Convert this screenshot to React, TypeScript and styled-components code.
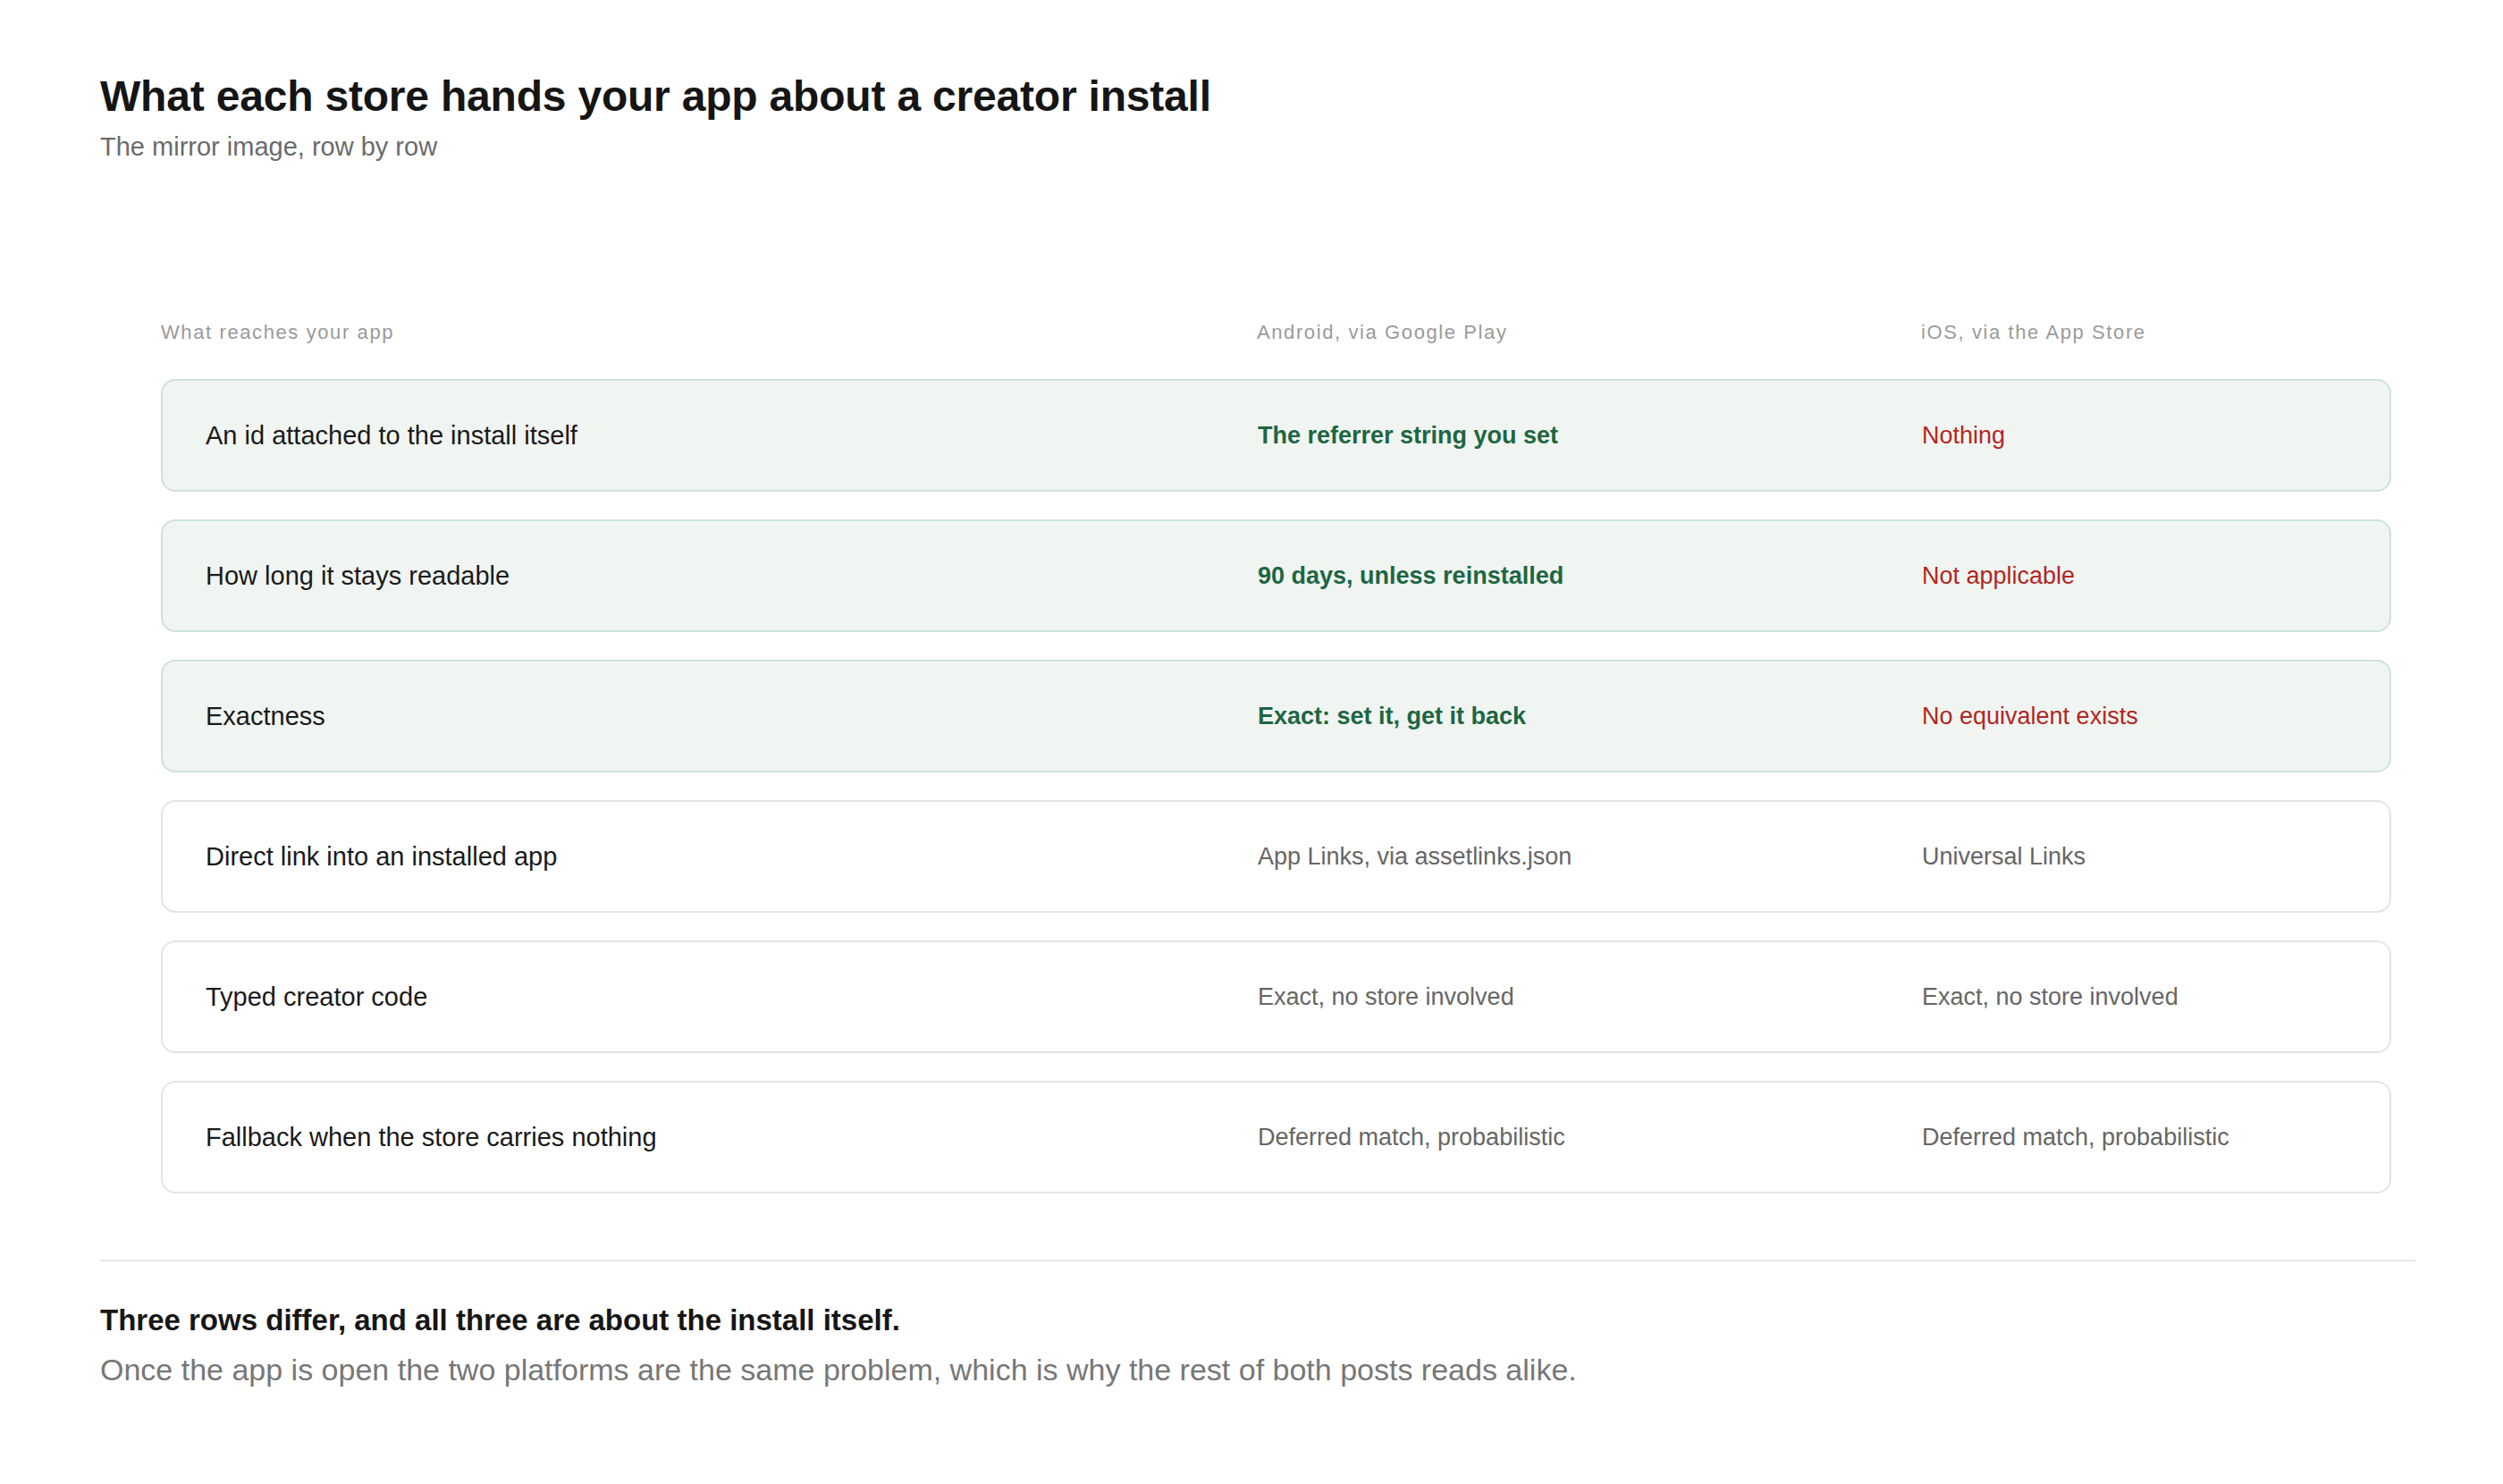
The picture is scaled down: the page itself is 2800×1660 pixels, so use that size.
import styled, { createGlobalStyle } from 'styled-components';

const Global = createGlobalStyle`
  body {
    margin: 0;
    background: #ffffff;
    font-family: "Liberation Sans", Arial, sans-serif;
  }
`;

type Tone = 'good' | 'bad' | 'plain';

const rows: { label: string; android: string; ios: string; tone: 'diff' | 'same' }[] = [
  { label: 'An id attached to the install itself', android: 'The referrer string you set', ios: 'Nothing', tone: 'diff' },
  { label: 'How long it stays readable', android: '90 days, unless reinstalled', ios: 'Not applicable', tone: 'diff' },
  { label: 'Exactness', android: 'Exact: set it, get it back', ios: 'No equivalent exists', tone: 'diff' },
  { label: 'Direct link into an installed app', android: 'App Links, via assetlinks.json', ios: 'Universal Links', tone: 'same' },
  { label: 'Typed creator code', android: 'Exact, no store involved', ios: 'Exact, no store involved', tone: 'same' },
  { label: 'Fallback when the store carries nothing', android: 'Deferred match, probabilistic', ios: 'Deferred match, probabilistic', tone: 'same' },
];

const Page = styled.main`
  padding: 78px 98px 0 112px;
`;

const Title = styled.h1`
  margin: 0;
  font-size: 48px;
  line-height: 60px;
  font-weight: 600;
  color: #151515;
  letter-spacing: -0.2px;
`;

const Subtitle = styled.p`
  margin: 6px 0 0;
  font-size: 29px;
  line-height: 40px;
  color: #6b6b6b;
`;

const Table = styled.section`
  margin: 173px 0 0 68px;
  width: 2495px;
  display: flex;
  flex-direction: column;
  gap: 31px;
`;

const HeaderRow = styled.div`
  display: grid;
  grid-template-columns: 1226px 743px 1fr;
  margin-bottom: 6px;
`;

const HeadCell = styled.div`
  font-size: 22px;
  line-height: 30px;
  letter-spacing: 1.6px;
  color: #9a9a9a;
`;

const Row = styled.div<{ $diff: boolean }>`
  display: grid;
  grid-template-columns: 1177px 743px 1fr;
  align-items: center;
  height: 126px;
  box-sizing: border-box;
  padding: 0 48px;
  border-radius: 16px;
  border: 2px solid ${p => (p.$diff ? '#cfe2d7' : '#e4e4e4')};
  background: ${p => (p.$diff ? '#f0f5f2' : '#ffffff')};
`;

const Label = styled.div`
  font-size: 29px;
  color: #1a1a1a;
`;

const Value = styled.div<{ $tone: Tone }>`
  font-size: 27px;
  color: ${p => (p.$tone === 'good' ? '#1d6642' : p.$tone === 'bad' ? '#b3261e' : '#666666')};
  font-weight: ${p => (p.$tone === 'good' ? 600 : 400)};
`;

const Divider = styled.hr`
  margin: 74px 0 0;
  border: 0;
  border-top: 2px solid #e6e6e6;
`;

const Summary = styled.h2`
  margin: 44px 0 0;
  font-size: 33px;
  line-height: 44px;
  font-weight: 700;
  color: #161616;
`;

const Note = styled.p`
  margin: 10px 0 0;
  font-size: 34px;
  line-height: 46px;
  color: #777777;
`;

export default function App() {
  return (
    <Page>
      <Global />
      <Title>What each store hands your app about a creator install</Title>
      <Subtitle>The mirror image, row by row</Subtitle>
      <Table>
        <HeaderRow>
          <HeadCell>What reaches your app</HeadCell>
          <HeadCell>Android, via Google Play</HeadCell>
          <HeadCell>iOS, via the App Store</HeadCell>
        </HeaderRow>
        {rows.map(r => {
          const diff = r.tone === 'diff';
          return (
            <Row key={r.label} $diff={diff}>
              <Label>{r.label}</Label>
              <Value $tone={diff ? 'good' : 'plain'}>{r.android}</Value>
              <Value $tone={diff ? 'bad' : 'plain'}>{r.ios}</Value>
            </Row>
          );
        })}
      </Table>
      <Divider />
      <Summary>Three rows differ, and all three are about the install itself.</Summary>
      <Note>Once the app is open the two platforms are the same problem, which is why the rest of both posts reads alike.</Note>
    </Page>
  );
}
